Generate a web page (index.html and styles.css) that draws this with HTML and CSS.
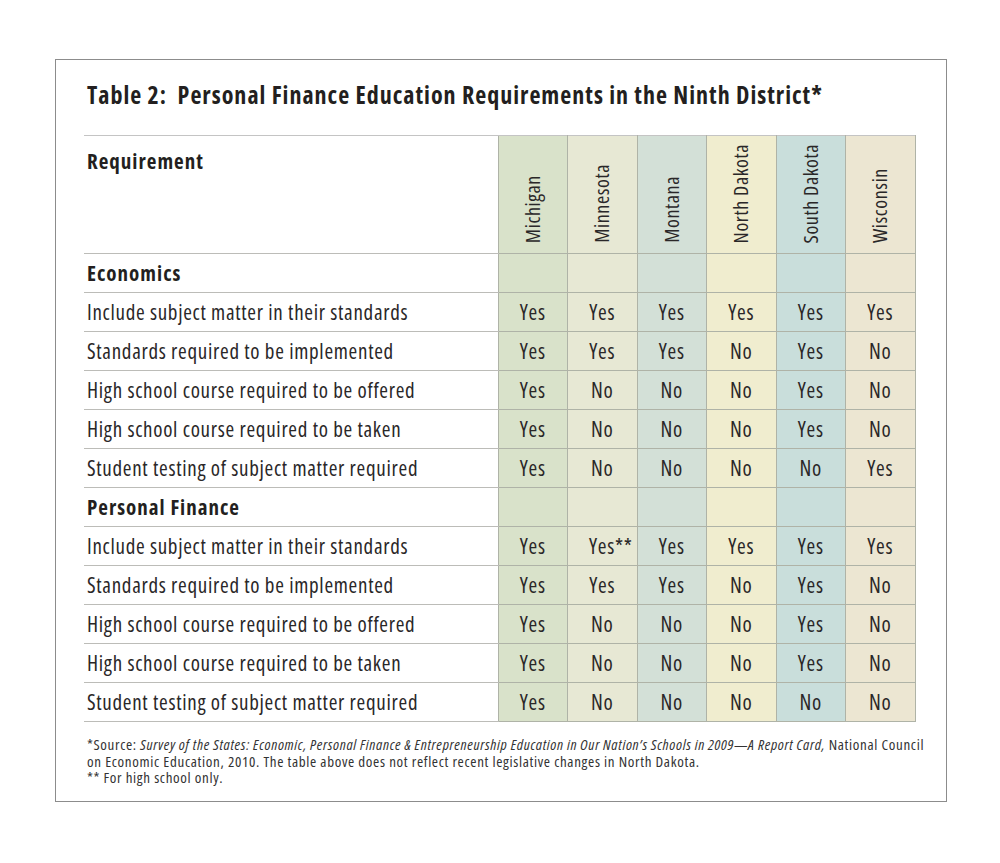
FILE: index.html
```html
<!DOCTYPE html>
<html lang="en">
<head>
<meta charset="utf-8">
<title>Table 2: Personal Finance Education Requirements in the Ninth District</title>
<link rel="stylesheet" href="styles.css">
</head>
<body>
<div class="frame">
  <h1 class="title">Table 2:&nbsp; Personal Finance Education Requirements in the Ninth District*</h1>
  <table class="req">
    <colgroup>
      <col class="col-label">
      <col class="col-s s1">
      <col class="col-s s2">
      <col class="col-s s3">
      <col class="col-s s4">
      <col class="col-s s5">
      <col class="col-s s6">
    </colgroup>
    <thead>
      <tr class="head">
        <th class="label head-label">Requirement</th>
        <th class="state"><span class="vert">Michigan</span></th>
        <th class="state"><span class="vert">Minnesota</span></th>
        <th class="state"><span class="vert">Montana</span></th>
        <th class="state"><span class="vert">North Dakota</span></th>
        <th class="state"><span class="vert">South Dakota</span></th>
        <th class="state"><span class="vert">Wisconsin</span></th>
      </tr>
    </thead>
    <tbody>
      <tr class="section"><th class="label">Economics</th><td></td><td></td><td></td><td></td><td></td><td></td></tr>
      <tr><td class="label">Include subject matter in their standards</td><td>Yes</td><td>Yes</td><td>Yes</td><td>Yes</td><td>Yes</td><td>Yes</td></tr>
      <tr><td class="label">Standards required to be implemented</td><td>Yes</td><td>Yes</td><td>Yes</td><td>No</td><td>Yes</td><td>No</td></tr>
      <tr><td class="label">High school course required to be offered</td><td>Yes</td><td>No</td><td>No</td><td>No</td><td>Yes</td><td>No</td></tr>
      <tr><td class="label">High school course required to be taken</td><td>Yes</td><td>No</td><td>No</td><td>No</td><td>Yes</td><td>No</td></tr>
      <tr><td class="label">Student testing of subject matter required</td><td>Yes</td><td>No</td><td>No</td><td>No</td><td>No</td><td>Yes</td></tr>
      <tr class="section"><th class="label">Personal Finance</th><td></td><td></td><td></td><td></td><td></td><td></td></tr>
      <tr><td class="label">Include subject matter in their standards</td><td>Yes</td><td class="star">Yes**</td><td>Yes</td><td>Yes</td><td>Yes</td><td>Yes</td></tr>
      <tr><td class="label">Standards required to be implemented</td><td>Yes</td><td>Yes</td><td>Yes</td><td>No</td><td>Yes</td><td>No</td></tr>
      <tr><td class="label">High school course required to be offered</td><td>Yes</td><td>No</td><td>No</td><td>No</td><td>Yes</td><td>No</td></tr>
      <tr><td class="label">High school course required to be taken</td><td>Yes</td><td>No</td><td>No</td><td>No</td><td>Yes</td><td>No</td></tr>
      <tr><td class="label">Student testing of subject matter required</td><td>Yes</td><td>No</td><td>No</td><td>No</td><td>No</td><td>No</td></tr>
    </tbody>
  </table>
  <div class="notes">
    <p>*Source: <em>Survey of the States: Economic, Personal Finance &amp; Entrepreneurship Education in Our Nation’s Schools in 2009—A Report Card,</em> National Council on Economic Education, 2010. The table above does not reflect recent legislative changes in North Dakota.</p>
    <p>** For high school only.</p>
  </div>
</div>
</body>
</html>
```

FILE: styles.css
```css
html, body {
  margin: 0;
  padding: 0;
  background: #ffffff;
}

body {
  font-family: "Open Sans", "DejaVu Sans Condensed", sans-serif;
  font-stretch: 75%;
  color: #231f20;
}

.frame {
  box-sizing: border-box;
  margin: 59px 0 0 55px;
  width: 892px;
  height: 743px;
  border: 1px solid #8c8c8c;
  padding: 17px 30px 0 28px;
}

.title {
  margin: 0 0 0 3px;
  font-size: 24px;
  line-height: 36px;
  font-weight: bold;
  letter-spacing: 1px;
  white-space: nowrap;
  color: #231f20;
}

.req {
  margin-top: 22px;
  border-collapse: collapse;
  table-layout: fixed;
  width: 831px;
  font-size: 21px;
  letter-spacing: 0.7px;
}

.col-label { width: 414px; }
.col-s { width: 69.5px; }
.s1 { background: #d9e2ca; }
.s2 { background: #e7e8d4; }
.s3 { background: #d3e0d7; }
.s4 { background: #f0edcf; }
.s5 { background: #c9dedb; }
.s6 { background: #ece6d2; }

.req th, .req td {
  padding: 0;
  height: 38px;
  border-bottom: 1px solid #bcbcb8;
  text-align: center;
  font-weight: normal;
  white-space: nowrap;
  color: #2a2728;
}

.req thead tr.head th {
  border-top: 1px solid #c4c4c4;
}

.req td:not(.label), .req th.state {
  border-left: 1px solid #afb3a7;
  border-right: 1px solid #afb3a7;
  border-bottom-color: #afb3a7;
}

.req .label {
  text-align: left;
  padding-left: 3px;
}

.req tr.section th.label {
  font-weight: bold;
  letter-spacing: 1px;
  color: #231f20;
}

.req tr.head th {
  height: 106px;
  vertical-align: bottom;
  line-height: 0;
}

.req tr.head th.head-label {
  vertical-align: top;
  font-weight: bold;
  letter-spacing: 1px;
  padding-top: 11px;
  line-height: 28px;
  color: #231f20;
}

.req th.state {
  padding-bottom: 10px;
}

.vert {
  display: inline-block;
  vertical-align: bottom;
  writing-mode: vertical-rl;
  transform: rotate(180deg);
  font-size: 20px;
  line-height: 24px;
  letter-spacing: 0.6px;
}

.req td.star {
  text-align: left;
  padding-left: 21px;
}

.notes {
  margin: 14px -10px 0 3px;
  font-size: 15px;
  line-height: 16.5px;
  letter-spacing: 0.66px;
  color: #333333;
}

.notes p {
  margin: 0;
}

.notes em {
  font-style: italic;
}
```
